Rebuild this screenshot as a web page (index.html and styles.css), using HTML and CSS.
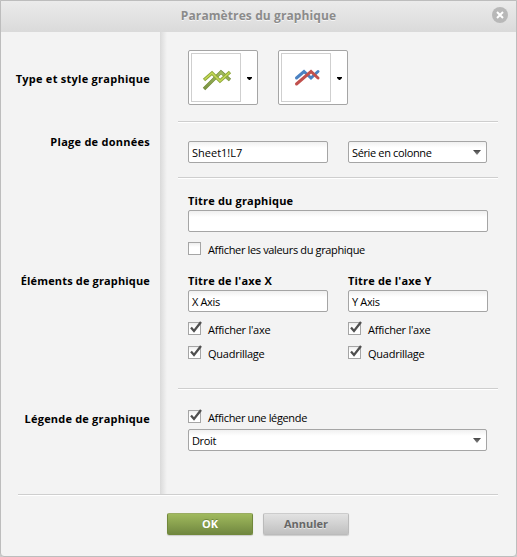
FILE: index.html
```html
<!DOCTYPE html>
<html lang="fr">
<head>
<meta charset="utf-8">
<title>Paramètres du graphique</title>
<link rel="stylesheet" href="styles.css">
</head>
<body>
<svg width="0" height="0" class="defs">
  <defs>
    <linearGradient id="green" gradientUnits="userSpaceOnUse" x1="0" y1="15" x2="0" y2="36"><stop offset="0" stop-color="#a8c263"/><stop offset="1" stop-color="#789140"/></linearGradient>
    <symbol id="check" viewBox="0 0 14 14"><path d="M3 6.500L6 10L13 1" fill="none" stroke="#505050" stroke-width="2.300"/></symbol>
  </defs>
</svg>
<main class="dialog">
  <header class="header"><h1>Paramètres du graphique</h1>
    <button class="close" aria-label="Fermer"><svg width="16" height="16"><circle cx="8" cy="8" r="8" fill="#b8b8b8"/><path d="M5 5l6 6M11 5l-6 6" stroke="#fff" stroke-width="2"/></svg></button>
  </header>
  <div class="content">
    <div class="labels">
      <div class="name n1"><span class="t1">Type et style graphique</span></div>
      <div class="name n2"><span class="t2">Plage de données</span></div>
      <div class="name n3"><span class="t3">Éléments de graphique</span></div>
      <div class="name n4"><span class="t4">Légende de graphique</span></div>
    </div>
    <div class="fields">
      <section class="section pickers">
        <div class="picker"><div class="thumb"><svg width="48" height="47"><g fill="none" stroke-width="3.4"><path d="M12 35L29 18L38 26" stroke="#748c3c"/><path d="M12.5 34.5L29 18.5L37.500 26" stroke="url(#green)" stroke-width="2.4"/><path d="M12 26L20 19L28 27L38 18" stroke="#8ea63a"/><path d="M12.500 25.500L20 19L28 27L37.500 18.500" stroke="#c4da55" stroke-width="1.500"/></g></svg></div><i class="mini"></i></div>
        <div class="picker"><div class="thumb"><svg width="48" height="47"><g fill="none" stroke-width="3" stroke-linecap="round"><path d="M14.500 24L22 17.500L29 24L36 17.500" stroke="#4c82c2"/><path d="M14.500 30L29 17.500L36 24" stroke="#c1504c"/></g></svg></div><i class="mini"></i></div>
      </section>
      <section class="section range">
        <div class="box half"><span class="v1">Sheet1!L7</span></div>
        <div class="box select colsel"><span class="v2">Série en colonne</span><i class="arrow"></i></div>
      </section>
      <section class="section elements">
        <div class="caption"><span class="c1">Titre du graphique</span></div>
        <div class="box"></div>
        <div class="option values"><i class="tick"></i><span class="o1">Afficher les valeurs du graphique</span></div>
        <div class="axes">
          <div>
            <div class="caption"><span class="c2">Titre de l'axe X</span></div>
            <div class="box"><span class="v3">X Axis</span></div>
            <div class="option"><i class="tick"><svg class="mark"><use href="#check"/></svg></i><span class="o2">Afficher l'axe</span></div>
            <div class="option"><i class="tick"><svg class="mark"><use href="#check"/></svg></i><span class="o3">Quadrillage</span></div>
          </div>
          <div>
            <div class="caption"><span class="c2">Titre de l'axe Y</span></div>
            <div class="box"><span class="v3">Y Axis</span></div>
            <div class="option"><i class="tick"><svg class="mark"><use href="#check"/></svg></i><span class="o2">Afficher l'axe</span></div>
            <div class="option"><i class="tick"><svg class="mark"><use href="#check"/></svg></i><span class="o3">Quadrillage</span></div>
          </div>
        </div>
      </section>
      <section class="section legend">
        <div class="option"><i class="tick"><svg class="mark"><use href="#check"/></svg></i><span class="o4">Afficher une légende</span></div>
        <div class="box select"><span class="v3">Droit</span><i class="arrow"></i></div>
      </section>
    </div>
  </div>
  <footer class="footer"><button class="btn ok">OK</button><button class="btn cancel">Annuler</button></footer>
</main>
</body>
</html>
```

FILE: styles.css
```css
* { box-sizing: border-box; }
body {
  margin: 0;
  width: 517px;
  height: 557px;
  overflow: hidden;
  background: #ccc;
  font: 11px/14px "Open Sans", "Noto Sans", sans-serif;
  color: #000;
}
.defs { position: absolute; }
.dialog {
  width: 517px;
  height: 557px;
  border: 1px solid #bdbdbd;
  border-radius: 0 0 4px 4px;
  background: #f3f3f3;
}
.header {
  height: 31px;
  position: relative;
  background: linear-gradient(#ebebeb, #dadada);
}
h1 {
  margin: 0;
  text-align: center;
  font-size: 12px;
  letter-spacing: 0.1px;
  line-height: 29px;
  color: #8b8b8b;
  text-shadow: 0 1px #f4f4f4;
}
.close {
  position: absolute;
  top: 6px;
  right: 8px;
  width: 16px;
  height: 16px;
  padding: 0;
  border: 0;
  background: none;
}
.close svg { display: block; }
.content { display: flex; height: 462px; }
.labels { width: 159px; padding-right: 10px; font-weight: bold; text-align: right; }
.name { height: 14px; white-space: nowrap; }
.n1 { margin-top: 40px; }
.n2 { margin-top: 49px; }
.n3 { margin-top: 125px; }
.n4 { margin-top: 124px; }
.t1, .t2 { letter-spacing: 0.26px; }
.t3 { letter-spacing: 0.15px; }
.t4 { letter-spacing: 0.2px; }
.c1, .c2 { letter-spacing: 0.18px; }
.v2, .v3 { letter-spacing: -0.36px; }
.o1, .o4 { letter-spacing: -0.35px; }
.o2, .o3 { letter-spacing: -0.25px; }
.fields {
  width: 338px;
  padding-left: 18px;
  background: linear-gradient(to right, #dadada, #f3f3f3 7px);
}
.section { padding: 0 10px; border-bottom: 1px solid #cecece; box-shadow: 0 1px #fff; }
.pickers { display: flex; gap: 20px; height: 90px; padding-top: 18px; }
.picker {
  display: flex;
  width: 70px;
  height: 55px;
  padding: 2px;
  border: 1px solid #a5a5a5;
  border-radius: 2px;
  background: #fff;
}
.thumb { width: 50px; height: 49px; border: 1px solid #cfcfcf; }
.thumb svg { display: block; }
.mini { width: 5px; height: 3px; margin: 24px 0 0 6px; background: #000; clip-path: polygon(0 0, 100% 0, 100% 34%, 60% 100%, 40% 100%, 0 34%); }
.range { display: flex; gap: 20px; height: 56px; padding-top: 19px; }
.box {
  height: 22px;
  padding: 0 3px;
  border: 1px solid #a5a5a5;
  border-radius: 2px;
  background: linear-gradient(#f0f0f0, #fff 6px);
  line-height: 21px;
  white-space: nowrap;
}
.half { width: 140px; }
.select { display: flex; justify-content: space-between; }
.colsel { width: 139px; }
.arrow { width: 8px; height: 5px; margin: 8px 2px 0 0; background: linear-gradient(#444, #888); clip-path: polygon(0 0, 100% 0, 50% 100%); }
.elements { height: 211px; padding-top: 16px; }
.caption { height: 16px; font-weight: bold; white-space: nowrap; }
.option { display: flex; gap: 7px; height: 14px; margin-top: 10px; white-space: nowrap; }
.option span { line-height: 15px; }
.tick { position: relative; width: 13px; height: 13px; border: 1px solid #a5a5a5; background: linear-gradient(#eee, #fff 4px); }
.mark { position: absolute; top: -2px; left: -1px; width: 14px; height: 14px; }
.axes { display: grid; grid-template-columns: 140px 140px; gap: 20px; margin-top: 18px; }
.legend { padding-top: 11px; border: 0; box-shadow: 0 0; }
.legend { box-shadow: none; }
.legend .box { width: 299px; margin-top: 5px; }
.footer {
  display: flex;
  gap: 10px;
  width: 480px;
  height: 60px;
  margin-left: 17px;
  padding: 18px 0 0 149px;
  border-top: 1px solid #cecece;
  box-shadow: inset 0 1px #fff;
}
.btn {
  width: 86px;
  height: 22px;
  padding: 0;
  border-radius: 2px;
  font: bold 11px/20px "Open Sans", sans-serif;
  box-shadow: 0 1px 1px #ccc;
}
.ok { border: 1px solid #71883b; border-top-color: #9aac62; background: linear-gradient(#a0ba5d, #718840); color: #fff; text-shadow: 0 -1px #71883b; }
.cancel { border: 1px solid #bbb; border-top-color: #ccc; background: linear-gradient(#e2e2e2, #c0c0c0); color: #666; text-shadow: 0 1px #e8e8e8; }
```
